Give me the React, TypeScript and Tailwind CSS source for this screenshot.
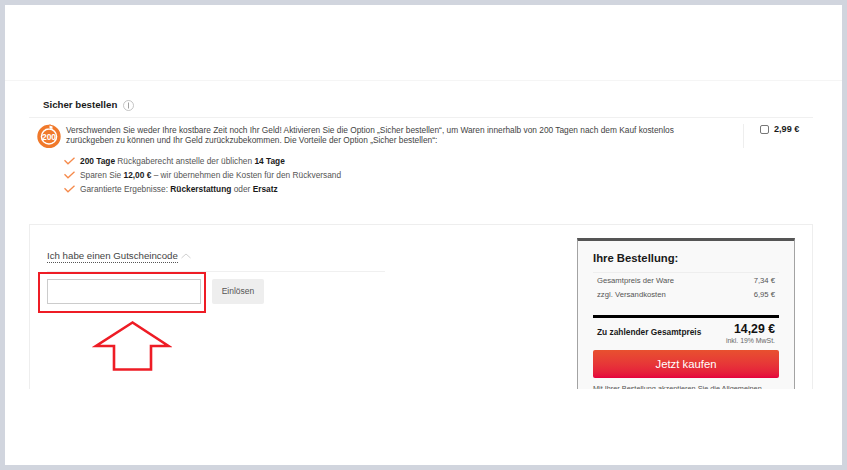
import React from 'react';

const font = { fontFamily: '"Liberation Sans", Arial, sans-serif' };

const CheckMark = () => (
  <svg width="11" height="8" viewBox="0 0 11 8" className="shrink-0" fill="none">
    <path d="M0.5 3.2 L4 6.8 L10.5 0.8" stroke="#f58a4b" strokeWidth="1.3" />
  </svg>
);

const ReturnBadge = () => (
  <svg width="24" height="24" viewBox="0 0 24 24" className="shrink-0">
    <circle cx="12" cy="12.5" r="10" fill="none" stroke="#f0792b" strokeWidth="3.4" />
    <path d="M8.5 3 L13.5 0 L13.5 5 Z" fill="#f0792b" />
    <path d="M12.5 1.5 L15.5 2.4 L15.5 4.8 L12.5 4.8 Z" fill="#ffffff" />
    <circle cx="12" cy="12.5" r="6.8" fill="#f0792b" />
    <text x="12" y="15.6" textAnchor="middle" fontSize="8.5" fontWeight="700" fill="#ffffff" fontFamily="Liberation Sans">200</text>
  </svg>
);

const OrderSummary = () => (
  <aside className="w-[218px] h-[151px] mt-[13px] shrink-0 bg-[#f9f9f9] border-x border-[#a3a3a3] border-t-[3px] border-t-[#555555] px-[15px] overflow-hidden">
    <h2 className="text-[11.3px] leading-[14px] font-bold text-[#1a1a1a] mt-[10px] pb-[7px] border-b border-[#eeeeee]">Ihre Bestellung:</h2>
    <div className="px-[4px] pt-[1px] text-[7.7px] text-[#555555]">
      <div className="flex justify-between h-[14px] items-center"><span>Gesamtpreis der Ware</span><span>7,34 €</span></div>
      <div className="flex justify-between h-[14px] items-center"><span>zzgl. Versandkosten</span><span>6,95 €</span></div>
    </div>
    <div className="h-[3px] bg-black mt-[13px]" />
    <div className="flex justify-between items-start px-[4px] mt-[4px]">
      <span className="text-[8.35px] font-bold text-[#1a1a1a] mt-[4px]">Zu zahlender Gesamtpreis</span>
      <div className="text-right">
        <div className="text-[12.3px] leading-[14px] font-bold text-[#111111]">14,29 €</div>
        <div className="text-[6.9px] leading-[9px] text-[#666666]">inkl. 19% MwSt.</div>
      </div>
    </div>
    <button className="block w-full h-[28px] mt-[5px] rounded-[2px] bg-gradient-to-b from-[#e8502f] to-[#e5003d] text-white text-[11.3px]">Jetzt kaufen</button>
    <p className="text-[7.3px] leading-[11px] text-[#555555] mt-[5px] whitespace-nowrap">Mit Ihrer Bestellung akzeptieren Sie die Allgemeinen</p>
  </aside>
);

export default function App() {
  return (
    <div style={font} className="relative w-[847px] h-[470px] bg-[#d1d5de] p-[5px] overflow-hidden">
      <div className="w-full h-full bg-white">
        <div className="h-[76px] border-b border-[#f5f5f5]" />

        <section className="mx-[24px] w-[784px]">
          <div className="flex items-center h-[37px] pt-[12px] pl-[14px] border-b border-[#f0f0f0]">
            <h3 className="text-[9.7px] font-bold text-[#1a1a1a]">Sicher bestellen</h3>
            <svg width="11" height="11" viewBox="0 0 11 11" className="ml-[6px]" fill="none">
              <circle cx="5.5" cy="5.5" r="5" stroke="#b5b5b5" strokeWidth="0.8" />
              <path d="M5.5 2.5 V8.5" stroke="#a0a0a0" strokeWidth="1" />
            </svg>
          </div>

          <div className="flex pt-[6px]">
            <div className="pl-[8px] w-[714px] shrink-0">
              <div className="flex gap-[5px]">
                <ReturnBadge />
                <p className="text-[8.33px] leading-[10px] text-[#444444] pt-[1px] w-[612px]">
                  Verschwenden Sie weder Ihre kostbare Zeit noch Ihr Geld! Aktivieren Sie die Option „Sicher bestellen“, um Waren innerhalb von 200 Tagen nach dem Kauf kostenlos zurückgeben zu können und Ihr Geld zurückzubekommen. Die Vorteile der Option „Sicher bestellen“:
                </p>
              </div>
              <ul className="pl-[27px] mt-[6px] text-[8.33px] text-[#555555]">
                <li className="flex items-center gap-[5px] h-[14px]">
                  <CheckMark />
                  <span><b className="text-[#1a1a1a]">200 Tage</b> Rückgaberecht anstelle der üblichen <b className="text-[#1a1a1a]">14 Tage</b></span>
                </li>
                <li className="flex items-center gap-[5px] h-[14px]">
                  <CheckMark />
                  <span>Sparen Sie <b className="text-[#1a1a1a]">12,00 €</b> – wir übernehmen die Kosten für den Rückversand</span>
                </li>
                <li className="flex items-center gap-[5px] h-[14px]">
                  <CheckMark />
                  <span>Garantierte Ergebnisse: <b className="text-[#1a1a1a]">Rückerstattung</b> oder <b className="text-[#1a1a1a]">Ersatz</b></span>
                </li>
              </ul>
            </div>
            <div className="h-[24px] border-l border-[#eeeeee] pl-[16px] flex items-start gap-[5px]">
              <span className="w-[9px] h-[9px] mt-[1px] border border-[#777777] rounded-[2px] bg-white" />
              <span className="text-[9.1px] leading-[11px] font-bold text-[#1a1a1a]">2,99 €</span>
            </div>
          </div>
        </section>

        <section className="mx-[24px] w-[784px] mt-[28px] h-[165px] border-t border-x border-[#eeeeee] flex justify-between overflow-hidden">
          <div className="pl-[17px] pt-[24px] w-[355px]">
            <div className="h-[23px] border-b border-[#f0f0f0] flex items-start">
              <span className="text-[9.7px] leading-[13px] text-[#444444] border-b border-dotted border-[#555555]">Ich habe einen Gutscheincode</span>
              <svg width="10" height="6" viewBox="0 0 10 6" className="ml-[3px] mt-[4px]" fill="none">
                <path d="M0.5 5 L5 1 L9.5 5" stroke="#c4c4c4" strokeWidth="0.8" />
              </svg>
            </div>
            <div className="flex gap-[11px] mt-[7px]">
              <input className="w-[154px] h-[25px] border border-[#cccccc] bg-white" />
              <button className="w-[52px] h-[25px] rounded-[2px] bg-[#eeeeee] text-[8.5px] text-[#555555]">Einlösen</button>
            </div>
          </div>
          <div className="mr-[17px]">
            <OrderSummary />
          </div>
        </section>
      </div>

      {/* annotation drawn over the page */}
      <div className="absolute left-[38px] top-[272px] w-[168px] h-[41px] border-2 border-[#ee1c25]" />
      <svg className="absolute left-[92px] top-[320px]" width="80" height="52" viewBox="0 0 80 52" fill="none">
        <path d="M40.5 2.5 L4 26 L22 26 L22 49.5 L59 49.5 L59 26 L76.5 26 Z" stroke="#ee1c25" strokeWidth="2.6" strokeLinejoin="miter" />
      </svg>
    </div>
  );
}
